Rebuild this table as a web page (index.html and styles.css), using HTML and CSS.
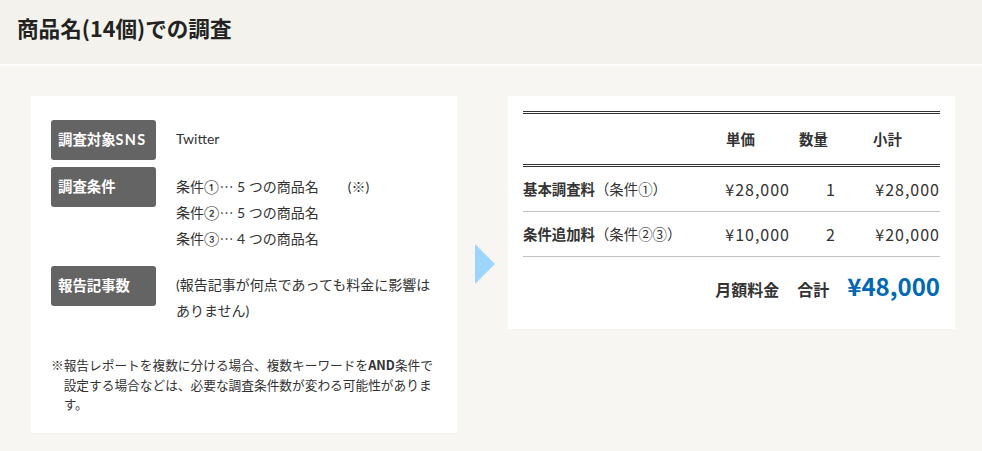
FILE: index.html
```html
<!DOCTYPE html>
<html lang="ja">
<head>
<meta charset="utf-8">
<title>商品名(14個)での調査</title>
<link rel="stylesheet" href="styles.css">
</head>
<body>
<header class="page-head">
  <h1 class="page-title">商品名(14個)での調査</h1>
</header>
<main class="main">
  <section class="card card-left">
    <div class="spec">
      <div class="spec-row">
        <div class="spec-label">調査対象<span class="latin">SNS</span></div>
        <div class="spec-value">Twitter</div>
      </div>
      <div class="spec-row">
        <div class="spec-label">調査条件</div>
        <div class="spec-value">
          <div class="line">条件①<span class="jp">…</span> 5 つの商品名<span class="mark">(※)</span></div>
          <div class="line">条件②<span class="jp">…</span> 5 つの商品名</div>
          <div class="line">条件③<span class="jp">…</span> 4 つの商品名</div>
        </div>
      </div>
      <div class="spec-row">
        <div class="spec-label">報告記事数</div>
        <div class="spec-value">(報告記事が何点であっても料金に影響はありません)</div>
      </div>
    </div>
    <p class="note">※報告レポートを複数に分ける場合、複数キーワードを<b>AND</b>条件で設定する場合などは、必要な調査条件数が変わる可能性があります。</p>
  </section>
  <div class="arrow-wrap"><span class="arrow"></span></div>
  <section class="card card-right">
    <table class="price">
      <thead>
        <tr>
          <th class="c1"></th>
          <th class="c2">単価</th>
          <th class="c3">数量</th>
          <th class="c4">小計</th>
        </tr>
      </thead>
      <tbody>
        <tr>
          <td class="c1"><b>基本調査料</b>（条件①）</td>
          <td class="c2 num">¥28,000</td>
          <td class="c3 num">1</td>
          <td class="c4 num">¥28,000</td>
        </tr>
        <tr>
          <td class="c1"><b>条件追加料</b>（条件②③）</td>
          <td class="c2 num">¥10,000</td>
          <td class="c3 num">2</td>
          <td class="c4 num">¥20,000</td>
        </tr>
      </tbody>
    </table>
    <div class="total">
      <span class="total-label">月額料金</span>
      <span class="total-label">合計</span>
      <span class="total-price">¥48,000</span>
    </div>
  </section>
</main>
</body>
</html>
```

FILE: styles.css
```css
* { box-sizing: border-box; }

body {
  margin: 0;
  background: #f7f6f2;
  color: #333;
  font-family: Lato, "Noto Sans CJK JP", sans-serif;
  font-size: 14px;
}

.page-head {
  height: 66px;
  background: #f3f2ec;
  border-bottom: 2px solid #fff;
  padding: 14px 17px 0;
}

.page-title {
  margin: 0;
  font-family: "Noto Sans CJK JP", sans-serif;
  font-size: 21.6px;
  line-height: 28px;
  font-weight: 700;
  color: #222;
}

.main {
  display: flex;
  align-items: flex-start;
  padding: 30px 0 0 31px;
}

.card {
  background: #fff;
}

.card-left {
  width: 426px;
  padding: 24px 20px 19px;
}

.spec {
  display: flex;
  flex-direction: column;
  gap: 7px;
}

.spec-row {
  display: flex;
  align-items: flex-start;
  gap: 20px;
}

.spec-label {
  flex: 0 0 105px;
  height: 40px;
  padding: 6px 7px;
  line-height: 28px;
  background: #646464;
  border-radius: 3px;
  color: #fff;
  font-weight: 700;
  font-size: 14.4px;
  white-space: nowrap;
}

.latin {
  letter-spacing: 1.3px;
}

.spec-value {
  flex: 1;
  padding: 6px 0 8px;
  line-height: 26px;
  color: #333;
}

.spec-value .line {
  height: 26px;
}

.jp {
  font-family: "Noto Sans CJK JP", sans-serif;
}

.mark {
  margin-left: 29px;
}

.note {
  margin: 23px 0 0;
  padding-left: 1em;
  text-indent: -1em;
  font-family: "Noto Sans CJK JP", sans-serif;
  font-size: 12.7px;
  line-height: 19.5px;
  color: #333;
}

.note b { font-weight: 700; }

.arrow-wrap {
  width: 51px;
  align-self: center;
  display: flex;
  padding-left: 18px;
}

.arrow {
  width: 0;
  height: 0;
  border-left: 20px solid #9dd5fd;
  border-top: 20px solid transparent;
  border-bottom: 20px solid transparent;
}

.card-right {
  width: 447px;
  padding: 15px 15px 25px;
}

.price {
  width: 100%;
  border-collapse: separate;
  border-spacing: 0;
  table-layout: fixed;
  font-family: "Noto Sans CJK JP", sans-serif;
}

.price th {
  border-top: 3px double #333;
  border-bottom: 3px double #333;
  height: 56px;
  padding: 0;
  line-height: 50px;
  font-size: 14.4px;
  font-weight: 700;
  color: #333;
  text-align: left;
}

.price td {
  padding: 10px 0;
  line-height: 24px;
  border-bottom: 1px solid #c2c2c2;
  font-size: 14.4px;
  color: #333;
  white-space: nowrap;
}

.price td b { font-weight: 700; }

.price .c1 { width: 192px; }
.price .c2 { width: 84px; }
.price .c3 { width: 46px; }
.price .c4 { width: 95px; }

.price th.c2 { padding-left: 11px; }
.price th.c4 { padding-left: 28px; }

.price td.num {
  text-align: right;
  font-size: 16px;
  letter-spacing: 1px;
}
.price td.c2 { padding-right: 9px; }
.price td.c3 { padding-right: 9px; }
.price td.c4 { padding-right: 0; }

.total {
  display: flex;
  justify-content: flex-end;
  align-items: baseline;
  gap: 18px;
  padding-top: 14px;
  line-height: 30px;
  font-family: "Noto Sans CJK JP", sans-serif;
}

.total-label {
  font-size: 16px;
  font-weight: 700;
  color: #333;
}

.total-price {
  font-size: 24px;
  font-weight: 700;
  color: #0068b4;
}
```
